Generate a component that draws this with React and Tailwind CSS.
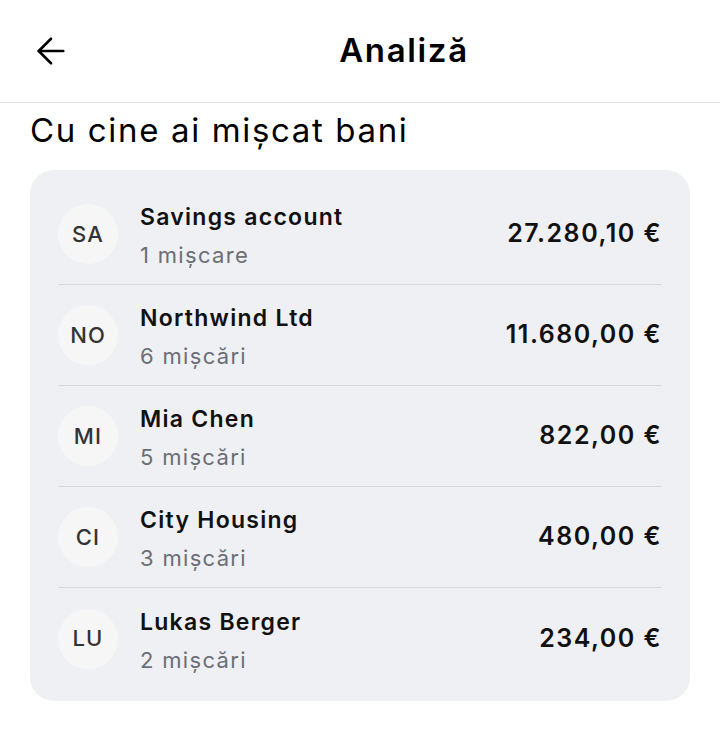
import React from "react";
import { ArrowLeft } from "lucide-react";

const rows = [
  { ini: "SA", name: "Savings account", sub: "1 mișcare", amt: "27.280,10 €" },
  { ini: "NO", name: "Northwind Ltd", sub: "6 mișcări", amt: "11.680,00 €" },
  { ini: "MI", name: "Mia Chen", sub: "5 mișcări", amt: "822,00 €" },
  { ini: "CI", name: "City Housing", sub: "3 mișcări", amt: "480,00 €" },
  { ini: "LU", name: "Lukas Berger", sub: "2 mișcări", amt: "234,00 €" },
];

export default function App() {
  return (
    <div className="w-[720px] h-[731px] bg-white text-black" style={{ fontFamily: "Inter, 'Noto Sans', sans-serif" }}>
      <header className="h-[103px] flex items-center border-b border-[#e2e3e6]">
        <div className="w-[88px] pl-[30px] flex items-center">
          <ArrowLeft size={42} strokeWidth={1.5} className="text-black" />
        </div>
        <h1 className="flex-1 text-center text-[33px] font-semibold tracking-[0.05em]">Analiză</h1>
      </header>
      <div className="px-[30px]">
        <h2 className="mt-[7px] text-[33px] font-normal leading-[40px] tracking-[0.05em]">Cu cine ai mișcat bani</h2>
        <div className="mt-[20px] bg-[#eff0f3] rounded-[24px] px-[28px] pt-[14px] pb-[12px]">
          {rows.map((r, i) => (
            <div
              key={r.ini}
              className={
                "h-[101px] flex items-center " + (i < rows.length - 1 ? "border-b border-[#d6d7db]" : "")
              }
            >
              <div className="w-[60px] h-[60px] rounded-full bg-[#f6f6f7] flex items-center justify-center text-[22px] font-medium tracking-[0.05em] text-[#333]">
                {r.ini}
              </div>
              <div className="ml-[22px] flex-1 flex flex-col pt-[4px]">
                <span className="text-[23px] font-semibold leading-[30px] tracking-[0.055em] text-[#111]">{r.name}</span>
                <span className="text-[22px] leading-[30px] mt-[8px] tracking-[0.06em] text-[#6b6e76]">{r.sub}</span>
              </div>
              <div className="text-[25px] font-semibold tracking-[0.06em] text-[#111]">{r.amt}</div>
            </div>
          ))}
        </div>
      </div>
    </div>
  );
}
